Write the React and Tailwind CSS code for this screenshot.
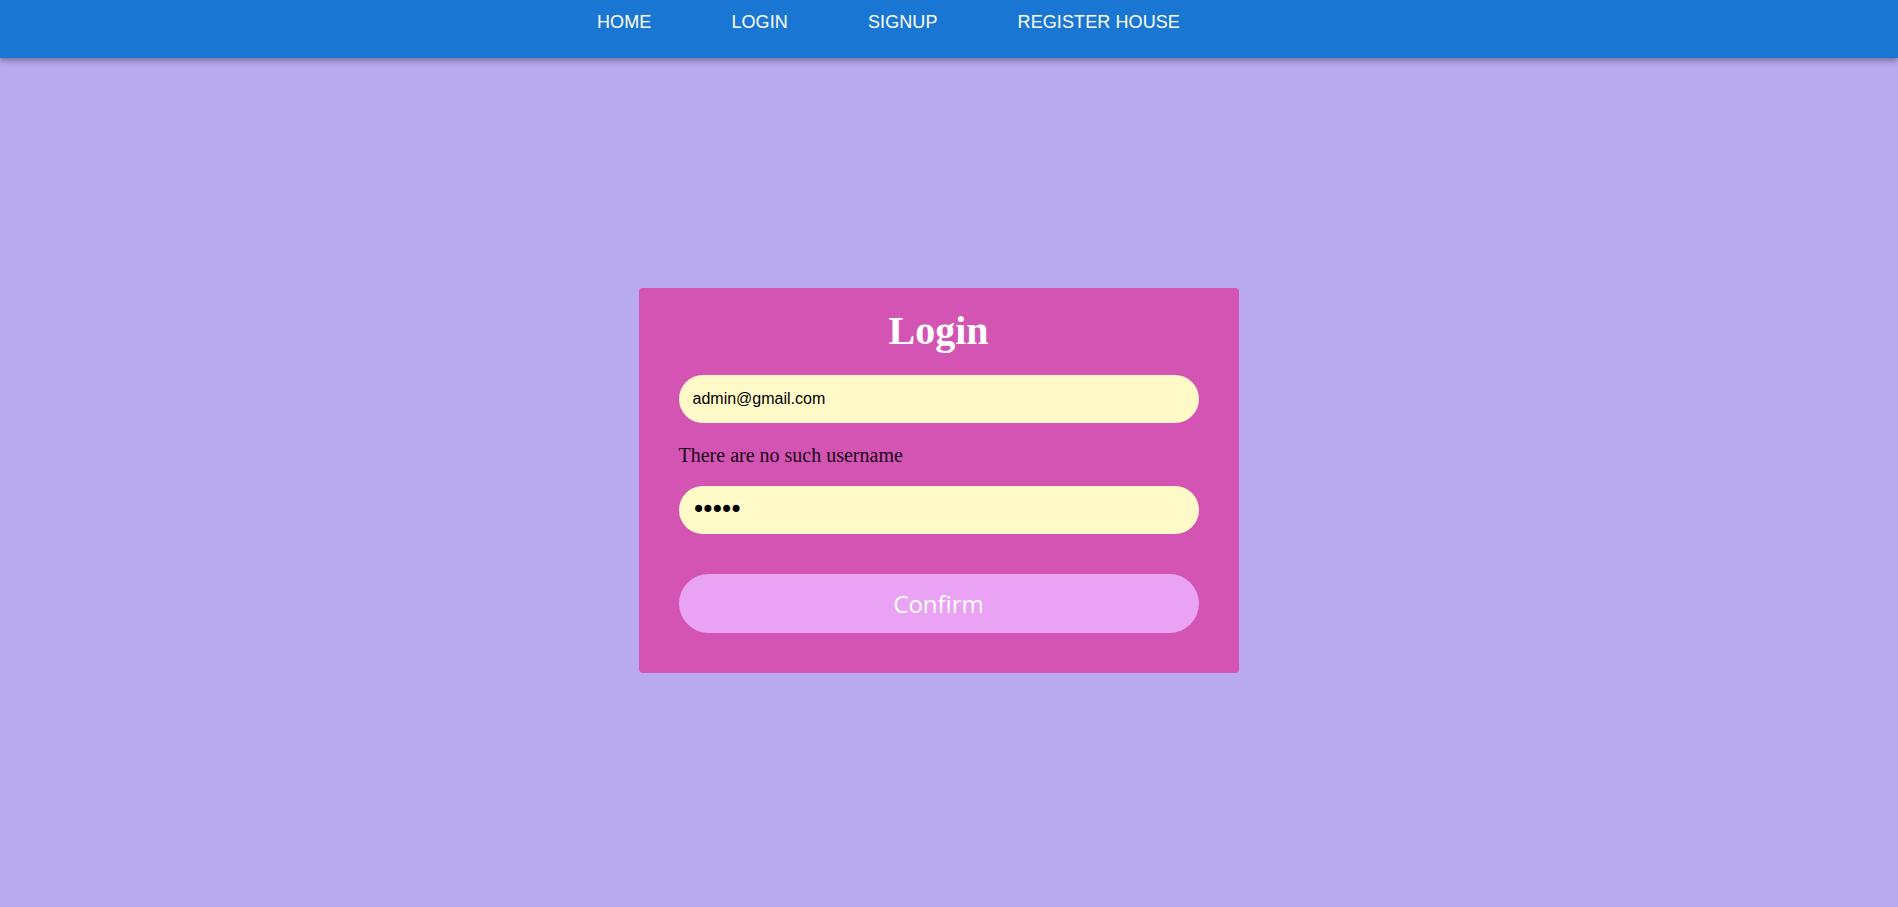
import React, { useState } from 'react';

const links = ['HOME', 'LOGIN', 'SIGNUP', 'REGISTER HOUSE'];

const Navbar = () => (
  <nav className="relative z-10 h-[58px] w-full bg-[#1976d2] shadow-[0px_2px_4px_-1px_rgba(0,0,0,0.2),0px_4px_5px_0px_rgba(0,0,0,0.14),0px_1px_10px_0px_rgba(0,0,0,0.12)]">
    <ul className="flex gap-[80px] pl-[597px] pt-[12px]">
      {links.map((l) => (
        <li key={l} className="text-[18px] leading-[21px] tracking-[0.1px] text-white font-['Liberation_Sans',Arial,sans-serif]">
          {l}
        </li>
      ))}
    </ul>
  </nav>
);

const LoginCard = () => {
  const [email, setEmail] = useState('admin@gmail.com');
  const [password, setPassword] = useState('12345');

  return (
    <form
      onSubmit={(e) => e.preventDefault()}
      className="flex w-[600px] flex-col rounded-[4px] bg-[#d454b4] px-10 pt-[21px] pb-10"
    >
      <h1 className="text-center text-[40px] leading-[44px] font-bold text-white font-['Liberation_Serif','Times_New_Roman',serif]">
        Login
      </h1>
      <input
        type="email"
        value={email}
        onChange={(e) => setEmail(e.target.value)}
        className="mt-[22px] h-12 w-full rounded-full bg-[#fffac8] px-[14px] text-[16px] text-black outline-none font-['Liberation_Sans',Arial,sans-serif]"
      />
      <p className="mt-[21px] text-[20px] leading-[22px] text-[#1a0514] font-['Liberation_Serif','Times_New_Roman',serif]">
        There are no such username
      </p>
      <input
        type="password"
        value={password}
        onChange={(e) => setPassword(e.target.value)}
        className="mt-[20px] h-12 w-full rounded-full bg-[#fffac8] pl-[13px] pr-[14px] text-[24px] tracking-[-4.8px] text-black outline-none font-['DejaVu_Sans',sans-serif]"
      />
      <button
        type="submit"
        className="mt-[40px] h-[59px] w-full rounded-full bg-[#eaa2f4] text-[24px] text-white font-['Open_Sans','Noto_Sans',sans-serif]"
      >
        Confirm
      </button>
    </form>
  );
};

export default function App() {
  return (
    <div className="flex min-h-[907px] flex-col bg-[#b9aaf0]">
      <Navbar />
      <main className="flex flex-1 items-center justify-center pr-[21px] pb-[4px]">
        <LoginCard />
      </main>
    </div>
  );
}
